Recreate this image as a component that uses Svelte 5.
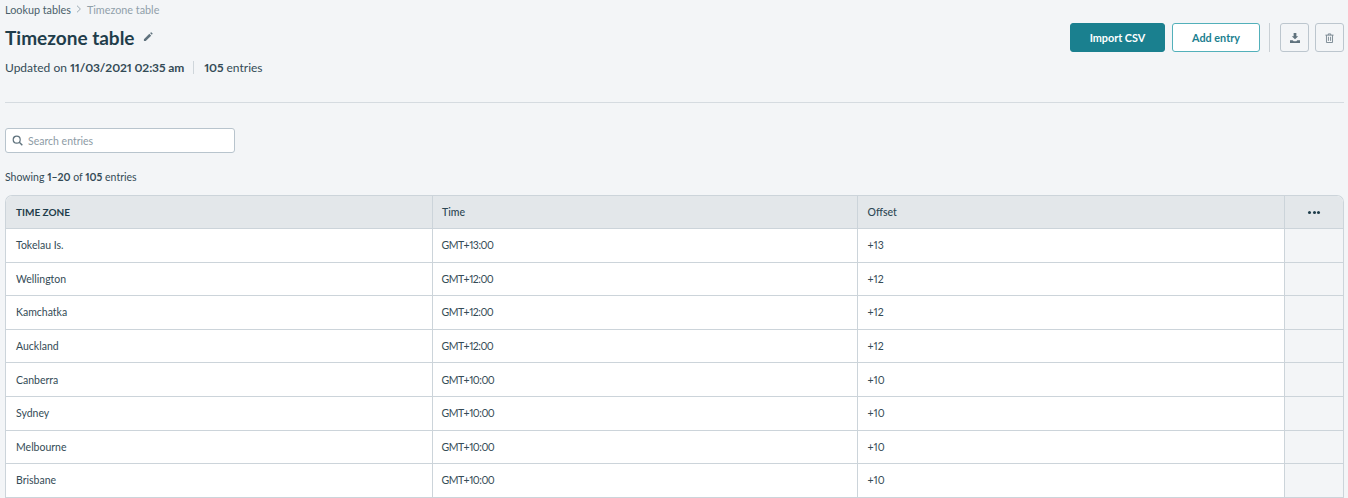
<script>
  const rows = [
    ['Tokelau Is.', 'GMT+13:00', '+13'],
    ['Wellington', 'GMT+12:00', '+12'],
    ['Kamchatka', 'GMT+12:00', '+12'],
    ['Auckland', 'GMT+12:00', '+12'],
    ['Canberra', 'GMT+10:00', '+10'],
    ['Sydney', 'GMT+10:00', '+10'],
    ['Melbourne', 'GMT+10:00', '+10'],
    ['Brisbane', 'GMT+10:00', '+10']
  ];
</script>

<div class="page">
  <nav class="crumbs">
    <span>Lookup tables</span>
    <svg width="6" height="8" viewBox="0 0 6 8"><path d="M1 .7 4.4 4 1 7.3" fill="none" stroke="#9aa9b2" stroke-width="1"/></svg>
    <span class="current">Timezone table</span>
  </nav>

  <header class="head">
    <div class="title-block">
      <div class="title-row">
        <h1>Timezone table</h1>
        <svg width="10" height="10" viewBox="0 0 11 11"><path d="M1 10V8l6-6 2 2-6 6H1ZM7.8 1.2 8.6.5a.6.6 0 0 1 .8 0l1 1a.6.6 0 0 1 0 .8l-.7.7-2-1.800Z" fill="#5f727d"/></svg>
      </div>
      <div class="meta">
        <span>Updated on <b>11/03/2021 02:35 am</b></span>
        <i></i>
        <span><b>105</b> entries</span>
      </div>
    </div>
    <div class="actions">
      <button class="btn primary">Import CSV</button>
      <button class="btn outline">Add entry</button>
      <i class="sep"></i>
      <button class="icon" aria-label="Download">
        <svg width="10" height="10" viewBox="0 0 11 11"><path d="M4 0h3v3.5h2L5.5 7 2 3.5h2V0ZM0 8h3l1 1h3l1-1h3v3H0V8Z" fill="#5f727d"/></svg>
      </button>
      <button class="icon" aria-label="Delete">
        <svg width="9" height="10" viewBox="0 0 11 12"><path d="M.5 2.500h10M4 2.500V1h3v1.500M1.800 2.500v9h7.400v-9M4.200 4.500v5M6.800 4.500v5" fill="none" stroke="#75858f" stroke-width="1.100"/></svg>
      </button>
    </div>
  </header>

  <hr />

  <label class="search">
    <svg width="11" height="11" viewBox="0 0 11 11"><circle cx="4.700" cy="4.700" r="3.500" fill="none" stroke="#5f727d" stroke-width="1.200"/><path d="m7.300 7.300 3 3" stroke="#5f727d" stroke-width="1.400"/></svg>
    <input placeholder="Search entries" />
  </label>

  <p class="showing">Showing <b>1–20</b> of <b>105</b> entries</p>

  <div class="table">
    <div class="row headrow">
      <div class="cell zone">TIME ZONE</div>
      <div class="cell">Time</div>
      <div class="cell">Offset</div>
      <div class="cell more"><span></span><span></span><span></span></div>
    </div>
    {#each rows as r}
      <div class="row">
        <div class="cell">{r[0]}</div>
        <div class="cell gmt">{r[1]}</div>
        <div class="cell">{r[2]}</div>
        <div class="cell blank"></div>
      </div>
    {/each}
  </div>
</div>

<style>
  :global(body) {
    margin: 0;
    background: #f3f5f7;
  }
  .page {
    height: 498px;
    overflow: hidden;
    box-sizing: border-box;
    padding: 0 4px 0 5px;
    font-family: Lato, sans-serif;
    font-variant-numeric: proportional-nums;
    color: #344b56;
  }
  .crumbs {
    display: flex;
    align-items: center;
    gap: 5px;
    height: 18px;
    font-size: 10.800px;
    color: #4a5f6a;
  }
  .current { color: #90a0aa; }
  .head {
    display: flex;
    justify-content: space-between;
    align-items: flex-start;
    margin-top: 5px;
  }
  .title-row {
    display: flex;
    align-items: center;
    gap: 8px;
    height: 28px;
  }
  h1 {
    margin: 0;
    font-size: 19px;
    font-weight: 700;
    color: #1f3d4b;
  }
  .meta {
    display: flex;
    align-items: center;
    margin-top: 9px;
    font-size: 12px;
  }
  .meta b { letter-spacing: -0.100px; }
  .meta i {
    width: 1px;
    height: 13px;
    background: #cfd6db;
    margin: 0 10px 0 9px;
  }
  b { font-weight: 700; }
  .actions {
    display: flex;
    align-items: center;
  }
  button {
    box-sizing: border-box;
    height: 29px;
    font: 700 10.800px Lato, sans-serif;
    border-radius: 3px;
    padding: 0;
  }
  .primary {
    width: 95px;
    background: #1a808f;
    border: 1px solid #1a808f;
    color: #fff;
  }
  .outline {
    width: 88px;
    margin-left: 7px;
    background: #fff;
    border: 1px solid #52b0ba;
    color: #1a808f;
  }
  .sep {
    width: 1px;
    height: 29px;
    background: #c9d0d5;
    margin: 0 10px 0 9px;
  }
  .icon {
    width: 29px;
    display: flex;
    align-items: center;
    justify-content: center;
    background: transparent;
    border: 1px solid #bcc6ce;
  }
  .icon + .icon { margin-left: 6px; }
  hr {
    border: 0;
    border-top: 1px solid #d5dbe0;
    margin: 27px 0 0;
  }
  .search {
    display: flex;
    align-items: center;
    gap: 5px;
    box-sizing: border-box;
    width: 230px;
    height: 25px;
    margin-top: 25px;
    padding: 0 6px;
    background: #fff;
    border: 1px solid #b8c4cd;
    border-radius: 3px;
  }
  input {
    flex: 1;
    min-width: 0;
    border: 0;
    padding: 0;
    outline: 0;
    background: transparent;
    font: 10.500px Lato, sans-serif;
  }
  input::placeholder { color: #8d9ba5; opacity: 1; }
  .showing {
    margin: 16px 0 0;
    height: 16px;
    line-height: 16px;
    font-size: 10.500px;
  }
  .table {
    margin-top: 10px;
    border: 1px solid #ccd4da;
    border-bottom: 0;
    border-radius: 7px 7px 0 0;
    overflow: hidden;
    background: #fff;
  }
  .row {
    display: grid;
    grid-template-columns: 425.500px 425.500px 427px 1fr;
    height: 33.600px;
    box-sizing: border-box;
    border-bottom: 1px solid #ccd4da;
    font-size: 10.500px;
  }
  .headrow {
    height: 33px;
    background: #e3e7ea;
    font-weight: 500;
    color: #2c4653;
  }
  .cell {
    display: flex;
    align-items: center;
    padding-left: 9.500px;
    border-left: 1px solid #ccd4da;
  }
  .cell:first-child {
    border-left: 0;
    padding-left: 10px;
  }
  .gmt {
    padding-left: 9px;
    letter-spacing: -0.500px;
  }
  .zone {
    font-size: 10px;
    font-weight: 700;
    color: #1f3d4b;
  }
  .blank { background: #f3f5f7; }
  .more {
    justify-content: center;
    gap: 1.500px;
    padding: 0;
  }
  .more span {
    width: 3px;
    height: 3px;
    border-radius: 50%;
    background: #1f3d4b;
  }
</style>
